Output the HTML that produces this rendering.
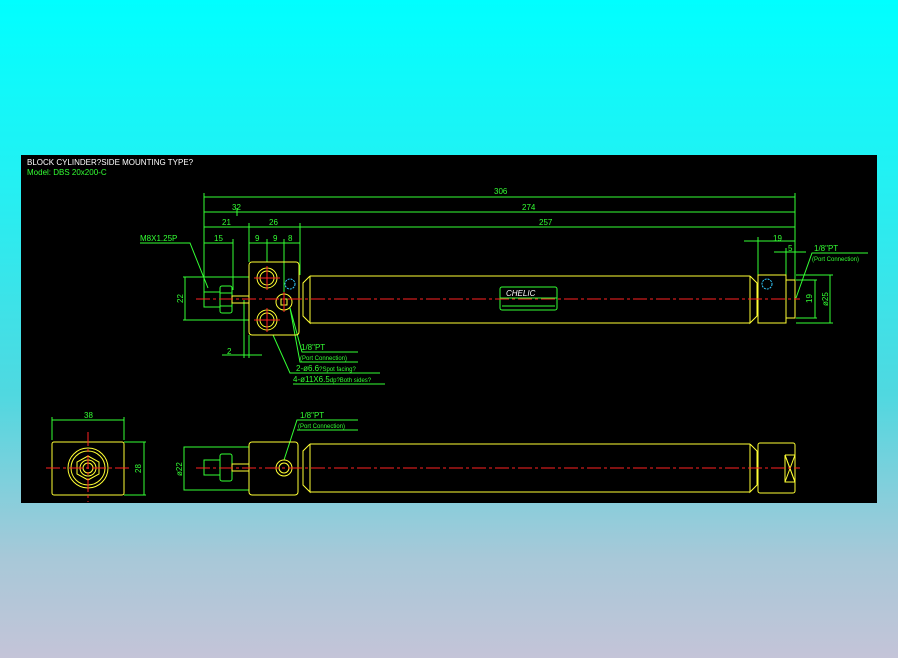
<!DOCTYPE html>
<html><head><meta charset="utf-8"><style>
html,body{margin:0;padding:0;width:898px;height:658px;overflow:hidden}
body{background:linear-gradient(180deg,#00ffff 0%,#20f2f4 25%,#50d8e0 60%,#a8c8d8 85%,#c4c4d8 100%)}
svg{position:absolute;left:0;top:0}
text{font-family:"Liberation Sans",sans-serif;font-size:8px;fill:#33ff33}
</style></head><body>
<svg width="898" height="658" viewBox="0 0 898 658">
<rect x="21" y="155" width="856" height="348" fill="#000"/>
<text x="27" y="165" style="fill:#fff">BLOCK CYLINDER?SIDE MOUNTING TYPE?</text>
<text x="27" y="175">Model: DBS 20x200-C</text>
<g stroke="#33ff33" stroke-width="1" fill="none">
 <!-- top dims -->
 <line x1="204" y1="197" x2="795" y2="197"/>
 <line x1="204" y1="212" x2="795" y2="212"/>
 <line x1="204" y1="227" x2="795" y2="227"/>
 <line x1="204" y1="243" x2="233" y2="243"/>
 <line x1="249" y1="243" x2="300" y2="243"/>
 <line x1="204" y1="193" x2="204" y2="300"/>
 <line x1="237" y1="208" x2="237" y2="216"/>
 <line x1="249" y1="223" x2="249" y2="262"/>
 <line x1="300" y1="223" x2="300" y2="275"/>
 <line x1="233" y1="239" x2="233" y2="290"/>
 <line x1="267" y1="239" x2="267" y2="262"/>
 <line x1="284" y1="239" x2="284" y2="294"/>
 <line x1="795" y1="193" x2="795" y2="300"/>
 <line x1="758" y1="237" x2="758" y2="275"/>
 <line x1="744" y1="241" x2="795" y2="241"/>
 <line x1="774" y1="252" x2="806" y2="252"/>
 <line x1="786" y1="248" x2="786" y2="276"/>
 <!-- 22 -->
 <line x1="185" y1="277" x2="185" y2="320"/>
 <line x1="183" y1="277" x2="249" y2="277"/>
 <line x1="183" y1="320" x2="249" y2="320"/>
 <!-- 2 -->
 <line x1="222" y1="355" x2="262" y2="355"/>
 <line x1="244" y1="300" x2="244" y2="358"/>
 <line x1="249" y1="335" x2="249" y2="358"/>
 <!-- leaders -->
 <polyline points="140,243 190,243 208,288"/>
 <polyline points="290,308 302,352 358,352"/>
 <polyline points="273,335 290,373 380,373"/>
 <polyline points="290,308 300,362 358,362"/>
 <line x1="293" y1="384" x2="385" y2="384"/>
 <polyline points="796,298 812,253 868,253"/>
 <!-- right dims -->
 <line x1="796" y1="280" x2="817" y2="280"/>
 <line x1="796" y1="318" x2="817" y2="318"/>
 <line x1="815" y1="280" x2="815" y2="318"/>
 <line x1="796" y1="275" x2="833" y2="275"/>
 <line x1="796" y1="323" x2="833" y2="323"/>
 <line x1="830" y1="275" x2="830" y2="323"/>
 <!-- chelic -->
 <rect x="500" y="287" width="57" height="23" rx="2"/>
 <line x1="500" y1="298" x2="557" y2="298"/>
 <line x1="502" y1="306" x2="555" y2="306"/>
 <!-- nut top -->
 <rect x="204" y="292" width="16" height="15"/>
 <rect x="220" y="286" width="12" height="27" rx="2"/>
 <line x1="220" y1="293" x2="232" y2="293"/><line x1="220" y1="306" x2="232" y2="306"/>
 <!-- bottom end view dims -->
 <line x1="52" y1="420" x2="124" y2="420"/>
 <line x1="52" y1="417" x2="52" y2="440"/><line x1="124" y1="417" x2="124" y2="440"/>
 <line x1="124" y1="442" x2="146" y2="442"/><line x1="124" y1="495" x2="146" y2="495"/>
 <line x1="144" y1="442" x2="144" y2="495"/>
 <!-- bottom side -->
 <rect x="184" y="447" width="65" height="43"/>
 <rect x="204" y="460" width="16" height="15"/>
 <rect x="220" y="454" width="12" height="27" rx="2"/>
 <polyline points="284,460 297,420 358,420"/>
 <line x1="297" y1="430" x2="358" y2="430"/>
</g>
<g fill="#33ff33">
 <text x="494" y="194">306</text>
 <text x="522" y="210">274</text>
 <text x="539" y="225">257</text>
 <text x="232" y="210">32</text>
 <text x="222" y="225">21</text>
 <text x="269" y="225">26</text>
 <text x="214" y="241">15</text>
 <text x="255" y="241">9</text>
 <text x="273" y="241">9</text>
 <text x="288" y="241">8</text>
 <text x="140" y="241">M8X1.25P</text>
 <text x="227" y="354">2</text>
 <text x="301" y="350">1/8"PT</text>
 <text x="300" y="360" style="font-size:6px">(Port Connection)</text>
 <text x="296" y="371">2-ø6.6<tspan style="font-size:6px">?Spot facing?</tspan></text>
 <text x="293" y="382">4-ø11X6.5<tspan style="font-size:6px">dp?Both sides?</tspan></text>
 <text x="773" y="241">19</text>
 <text x="788" y="251">5</text>
 <text x="814" y="251">1/8"PT</text>
 <text x="812" y="261" style="font-size:6px">(Port Connection)</text>
 <text transform="translate(812,303) rotate(-90)">19</text>
 <text transform="translate(828,306) rotate(-90)">ø25</text>
 <text transform="translate(183,303) rotate(-90)">22</text>
 <text x="84" y="418">38</text>
 <text transform="translate(141,473) rotate(-90)">28</text>
 <text transform="translate(182,476) rotate(-90)">ø22</text>
 <text x="300" y="418">1/8"PT</text>
 <text x="298" y="428" style="font-size:6px">(Port Connection)</text>
 <text x="506" y="296" style="fill:#fff;font-style:italic;font-size:8px">CHELIC</text>
</g>
<!-- yellow geometry -->
<g stroke="#ffff33" stroke-width="1" fill="none">
 <rect x="249" y="262" width="50" height="73" rx="3"/>
 <circle cx="267" cy="278" r="10"/><circle cx="267" cy="278" r="7"/>
 <circle cx="267" cy="320" r="10"/><circle cx="267" cy="320" r="7"/>
 <circle cx="284" cy="302" r="8"/><rect x="281" y="299" width="6" height="6"/>
 <polyline points="310,276 750,276"/><polyline points="310,323 750,323"/>
 <polyline points="310,276 303,283 303,316 310,323 310,276"/>
 <polyline points="750,276 757,283 757,316 750,323 750,276"/>
 <rect x="758" y="275" width="28" height="48"/>
 <polyline points="786,280 795,280 795,318 786,318"/>
 <rect x="232" y="296" width="17" height="7"/>
 <!-- bottom -->
 <rect x="52" y="442" width="72" height="53" rx="2"/>
 <circle cx="88" cy="468" r="20"/><circle cx="88" cy="468" r="17"/>
 <polygon points="88,456 99,462 99,474 88,480 77,474 77,462"/>
 <circle cx="88" cy="468" r="8"/><circle cx="88" cy="468" r="5"/>
 <rect x="249" y="442" width="49" height="53" rx="3"/>
 <circle cx="284" cy="468" r="8"/><circle cx="284" cy="468" r="5"/>
 <line x1="310" y1="444" x2="750" y2="444"/><line x1="310" y1="492" x2="750" y2="492"/>
 <polyline points="310,444 303,451 303,485 310,492 310,444"/>
 <polyline points="750,444 757,451 757,485 750,492 750,444"/>
 <rect x="758" y="443" width="37" height="50" rx="2"/>
 <polyline points="785,455 795,455 795,482 785,482 785,455 795,482 M795,455 785,482"/>
 <line x1="785" y1="455" x2="795" y2="482"/><line x1="795" y1="455" x2="785" y2="482"/>
 <rect x="232" y="464" width="17" height="7"/>
</g>
<g stroke="#ff2222" stroke-width="1" stroke-dasharray="14,3,3,3">
 <line x1="196" y1="299" x2="800" y2="299"/>
 <line x1="196" y1="468" x2="800" y2="468"/>
 <line x1="46" y1="468" x2="130" y2="468"/>
 <line x1="88" y1="432" x2="88" y2="502"/>
</g>
<g stroke="#ff2222" stroke-width="1">
 <line x1="254" y1="278" x2="280" y2="278"/><line x1="267" y1="266" x2="267" y2="290"/>
 <line x1="254" y1="320" x2="280" y2="320"/><line x1="267" y1="308" x2="267" y2="332"/>
 <line x1="284" y1="292" x2="284" y2="312"/>
</g>
<g stroke="#33ccff" stroke-width="1" fill="none" stroke-dasharray="2,1">
 <circle cx="290" cy="284" r="5"/><circle cx="767" cy="284" r="5"/>
</g>
</svg>
</body></html>
